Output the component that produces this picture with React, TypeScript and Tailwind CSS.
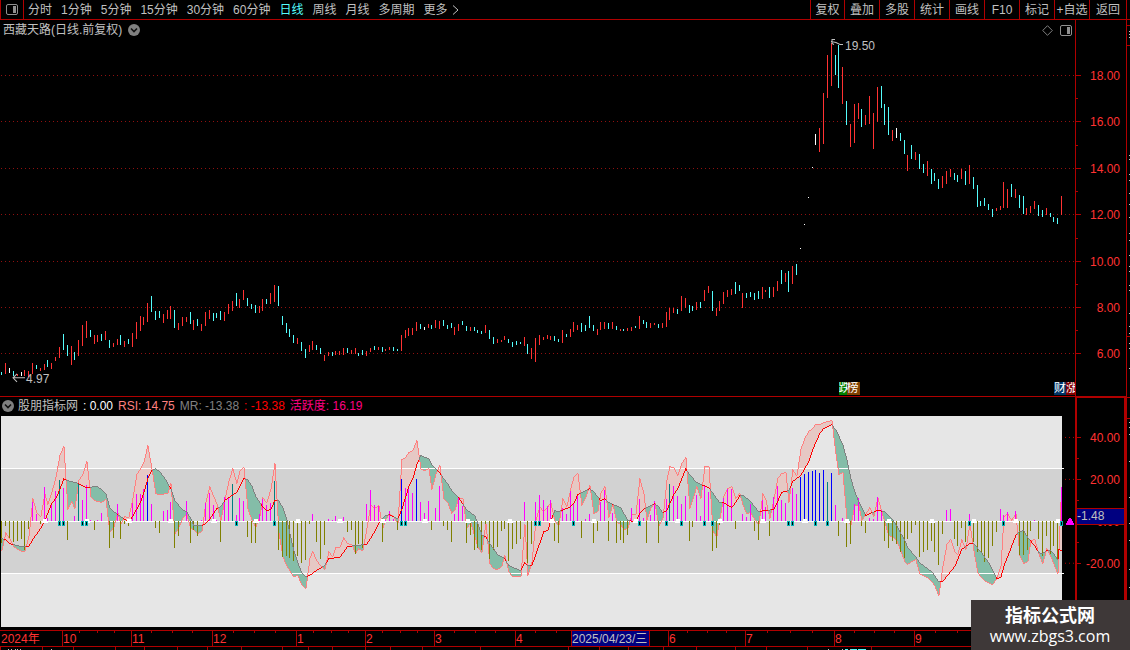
import React from 'react';
import clsx from 'clsx';

const PERIODS = ['分时', '1分钟', '5分钟', '15分钟', '30分钟', '60分钟', '日线', '周线', '月线', '多周期'];
const TOOLS = ['复权', '叠加', '多股', '统计', '画线', 'F10', '标记', '+自选', '返回'];

const LINE = '#b00000';

// x,high,low,type (r = up, c = down, w = flat)
const CANDLES = `
1,372,375,c 5,363,374,r 9,368,373,w 13,371,376,c 17,374,376,r 21,372,376,w 24,370,376,r 28,371,377,r 32,363,374,r 36,365,369,c
40,368,371,r 44,364,370,r 47,360,367,c 51,363,369,r 55,357,361,r 59,347,358,r 63,334,350,c 67,345,356,c 71,346,365,r 74,352,360,c
78,340,356,r 82,325,346,r 86,321,338,r 90,330,337,c 94,335,344,r 97,335,342,r 101,334,341,c 105,331,340,r 109,340,348,c 113,343,347,r
117,339,345,r 120,335,345,c 124,341,347,r 128,339,344,c 132,333,347,r 136,322,339,r 140,316,331,r 143,317,325,r 147,303,322,r 151,296,312,c
155,311,320,c 159,311,318,c 163,314,323,r 167,310,319,r 170,306,319,r 174,310,328,c 178,323,330,r 182,317,326,r 186,317,322,r 190,312,324,c
193,320,330,r 197,319,326,c 201,324,331,r 205,312,326,r 209,310,319,r 213,313,321,c 216,313,318,c 220,311,320,c 224,312,321,r 228,304,314,r
232,301,311,r 236,293,306,c 239,299,308,r 243,290,300,r 247,298,306,c 251,304,309,c 255,305,313,c 259,306,313,r 262,299,311,r 266,299,304,c
270,293,304,r 274,285,302,r 278,286,306,c 282,316,325,c 286,323,333,c 289,329,337,c 293,335,343,c 297,338,344,r 301,342,351,c 305,349,358,c
309,345,352,r 312,341,350,r 316,345,350,c 320,348,354,c 324,355,361,r 328,352,356,r 332,352,356,c 335,351,355,r 339,351,355,r 343,348,355,r
347,348,353,c 351,350,354,r 355,348,354,r 358,353,356,c 362,350,355,c 366,351,356,r 370,348,352,r 374,346,350,c 378,347,350,r 382,347,352,c
385,349,351,r 389,347,350,r 393,347,351,c 397,349,351,c 401,335,351,r 405,330,338,r 408,328,336,r 412,328,335,r 416,322,331,r 420,324,329,c
424,327,330,w 428,324,328,r 431,325,329,c 435,320,328,r 439,321,329,r 443,320,326,c 447,325,329,c 451,323,328,c 454,327,335,r 458,324,331,r
462,321,325,c 466,326,331,c 470,327,331,r 474,327,331,c 477,330,333,c 481,331,334,c 485,325,333,r 489,330,339,c 493,337,344,c 497,339,343,r
501,340,342,r 504,336,340,r 508,339,343,c 512,342,347,c 516,341,345,c 520,342,344,c 524,337,346,r 527,344,354,c 531,348,359,r 535,338,362,r
539,335,345,r 543,337,340,r 547,335,339,r 550,336,340,r 554,336,341,c 558,339,342,c 562,330,343,r 566,334,337,c 570,329,337,r 573,322,332,r
577,325,330,r 581,323,332,c 585,325,331,c 589,316,328,c 593,325,331,c 597,329,335,r 600,322,330,r 604,322,329,r 608,323,329,c 612,322,329,r
616,326,330,c 620,329,331,r 623,329,331,c 627,328,331,r 631,327,331,r 635,326,328,c 639,316,329,r 643,320,324,c 646,322,328,c 650,323,328,r
654,323,325,r 658,324,328,c 662,323,328,r 666,312,327,r 669,308,320,r 673,308,313,r 677,309,314,c 681,296,311,r 685,298,308,r 689,305,313,c
692,306,311,c 696,302,310,r 700,302,308,c 704,290,301,r 708,286,293,r 712,291,311,c 716,308,316,r 719,301,311,r 723,292,304,r 727,290,297,r
731,289,295,r 735,282,294,c 739,285,291,c 742,293,308,r 746,293,298,c 750,292,297,c 754,293,300,c 758,291,299,c 762,287,299,r 765,290,292,r
769,287,298,c 773,287,297,r 777,281,291,r 781,270,284,c 785,273,282,r 788,271,292,c 792,266,284,r 796,264,275,c 800,248,249,w 804,224,225,w
808,197,198,w 812,167,168,w 815,134,145,w 819,128,152,r 823,93,144,r 827,55,98,r 831,43,86,r 835,55,75,c 838,45,88,c 842,67,104,r
846,101,125,c 850,124,147,r 854,104,143,r 858,103,119,r 861,109,127,c 865,115,125,r 869,96,124,r 873,113,149,r 877,87,122,r 881,86,108,c
884,104,125,c 888,107,135,c 892,130,141,r 896,128,138,w 900,133,141,c 904,140,154,c 907,155,171,r 911,145,159,c 915,152,160,r 919,154,169,c
923,164,173,c 927,161,176,r 931,169,184,c 934,173,181,c 938,179,189,c 942,176,188,r 946,171,184,r 950,169,177,r 954,173,180,c 957,175,182,c
961,169,179,r 965,171,185,c 969,165,184,r 973,177,189,c 977,185,207,c 980,201,206,c 984,198,206,c 988,204,210,c 992,209,217,c 996,208,211,r
1000,206,210,r 1003,182,208,r 1007,189,208,r 1011,184,197,c 1015,189,198,r 1019,195,208,c 1023,196,214,c 1026,208,215,r 1030,206,213,r 1034,201,209,r
1038,205,216,c 1042,210,217,c 1046,208,215,r 1050,213,217,c 1053,217,222,c 1057,218,224,c 1061,196,215,r`;

// Activity bars: x,end,type (o = olive, m = magenta, t = teal, b = blue)
const ACTIVITY = `
1,543,o 5,526,o 9,538,o 13,542,o 17,541,o 21,539,o 24,550,o 28,529,o 32,502,m 36,514,m 40,524,o 44,487,m 47,518,m 51,505,m 55,491,m
59,480,t 63,488,m 67,540,o 74,516,m 78,483,t 82,500,m 86,485,m 90,520,m 94,530,o 97,520,m 101,513,m 109,548,o 113,538,o 117,504,m 120,539,o
124,524,o 128,526,o 132,503,m 136,494,m 140,494,m 143,489,m 147,475,b 151,504,m 155,528,o 159,533,o 163,511,m 167,510,m 170,502,m 174,548,o
178,536,o 186,501,m 190,543,o 193,530,o 197,536,o 201,520,m 205,503,m 209,493,m 213,505,m 216,520,m 220,542,o 224,497,m 228,497,m 232,484,t
236,515,m 239,498,m 243,501,m 247,537,o 251,543,o 255,543,o 259,514,m 262,499,m 266,505,m 270,503,m 274,481,t 278,550,o 282,557,o 286,556,o
289,558,o 293,561,o 297,556,o 301,563,o 305,560,o 309,524,o 312,514,m 316,542,o 320,559,o 324,545,o 328,519,m 332,520,m 335,516,m 339,519,m
343,517,m 347,532,o 351,530,o 355,554,o 358,544,o 362,548,o 366,504,m 370,490,m 374,505,m 378,506,m 382,542,o 385,520,m 389,511,m 393,519,m
397,530,o 401,479,b 405,488,m 408,487,m 412,493,m 416,479,b 420,502,m 424,513,m 428,501,m 431,530,o 435,508,m 439,486,m 443,526,o 447,530,o
451,542,o 454,514,m 458,497,m 462,506,m 466,543,o 470,535,o 474,550,o 477,548,o 481,550,o 485,524,o 489,559,o 493,550,o 497,547,o 501,531,o
504,529,o 508,561,o 512,549,o 516,544,o 520,539,o 524,502,m 527,563,o 531,544,o 535,502,m 539,495,m 543,500,m 547,506,m 550,500,m 554,541,o
558,543,o 562,508,m 566,514,m 570,491,m 573,504,m 577,496,m 581,538,o 585,519,m 589,514,m 593,543,o 597,531,o 600,502,m 604,490,m 608,541,o
612,513,m 616,543,o 620,540,o 623,543,o 627,535,o 631,508,m 635,519,m 639,499,m 643,518,m 646,543,o 650,515,m 654,501,m 658,543,o 666,499,m
669,484,t 673,486,m 677,496,m 681,504,m 685,496,m 689,541,o 692,527,o 696,495,m 700,516,m 704,485,m 708,492,m 712,551,o 716,548,o 719,525,o
723,498,m 727,489,m 731,489,m 735,529,o 742,514,m 746,517,m 750,504,m 754,531,o 758,540,o 762,500,m 765,507,m 769,536,o 773,497,m 777,486,m
781,500,m 785,503,m 792,488,m 796,494,m 800,477,b 804,474,b 808,472,b 812,471,b 815,470,b 819,473,b 823,470,b 827,482,t 831,473,b 835,505,m
838,536,o 842,518,m 846,547,o 850,544,o 854,504,m 858,498,m 861,526,o 865,533,o 869,518,m 873,519,m 877,497,m 881,510,m 884,541,o 888,548,o
892,541,o 896,544,o 900,552,o 904,558,o 907,539,o 911,533,o 915,525,o 919,557,o 923,552,o 927,550,o 931,541,o 934,552,o 938,565,o 942,534,o
946,510,m 950,509,m 954,539,o 957,546,o 961,528,o 965,542,o 969,514,m 973,542,o 977,552,o 981,553,o 984,562,o 988,558,o 992,546,o 996,532,o
1000,509,m 1003,515,m 1007,512,m 1015,511,m 1019,555,o 1023,555,o 1027,550,o 1030,531,o 1034,520,m 1038,539,o 1042,556,o 1046,536,o 1050,554,o
1053,546,o 1057,560,o 1061,487,m`;

const RSI = `
1,550 5,532 9,538 13,546 21,551 24,551 28,536 32,498 36,512 40,516 44,493 47,504 51,492 55,477 59,455 63,446 67,509 71,501 74,508 78,480
82,474 86,461 90,496 94,500 101,502 105,499 109,532 113,527 117,512 120,524 124,516 128,517 132,498 136,474 140,468 143,462 147,445 151,468
155,493 159,494 167,493 170,483 174,534 178,527 182,518 186,514 190,528 193,529 197,533 201,531 205,502 209,486 213,496 216,503 220,520
224,499 228,481 232,468 236,483 239,471 243,467 247,508 251,519 255,527 259,516 262,497 266,502 270,489 274,463 278,532 282,556 286,565
289,570 293,576 297,575 301,584 305,588 309,558 312,551 316,560 320,565 324,569 328,551 332,556 335,547 339,547 343,537 347,543 351,544
355,553 358,548 362,550 366,528 370,504 374,508 378,505 382,528 385,519 389,513 393,516 397,523 401,459 405,457 408,452 412,450 416,440
420,468 424,470 428,468 431,489 435,474 439,465 443,498 447,502 451,513 454,510 458,497 462,498 466,528 470,522 474,536 477,546 481,552
485,523 489,563 493,568 497,569 501,566 504,555 508,571 512,576 520,576 524,524 527,575 531,562 535,520 539,506 543,511 547,507 550,502
554,520 558,525 562,498 566,506 570,488 573,477 577,473 581,505 585,497 589,485 593,513 597,511 600,493 604,486 608,517 612,504 616,521
620,524 623,529 627,528 631,514 635,514 639,478 643,493 646,520 650,508 654,502 658,526 662,518 666,480 669,466 673,467 677,475 681,463
685,457 689,508 692,499 696,486 700,498 704,466 708,466 712,530 716,536 719,518 723,496 727,488 731,486 735,498 739,493 742,504 746,513
750,512 754,519 758,524 762,493 765,499 769,518 773,499 777,478 781,473 785,472 788,502 792,469 796,475 800,449 804,438 808,431 812,428
815,424 819,424 823,422 827,421 831,420 835,453 838,474 842,472 846,518 850,525 854,505 858,505 861,520 865,514 869,507 873,516 877,497
881,511 884,522 888,535 892,536 896,540 900,550 904,561 907,564 911,561 915,559 919,573 923,575 927,577 931,581 934,585 938,595 942,566
946,544 950,539 954,551 957,554 961,539 965,549 969,523 973,550 977,572 981,577 984,580 988,582 992,584 996,578 1000,566 1003,517 1007,513
1011,520 1015,513 1019,555 1023,563 1027,561 1030,540 1034,539 1038,553 1042,563 1046,548 1050,556 1057,573 1060,502 1061,489`;

const MR = `
1,538 5,539 9,543 21,546 28,546 32,539 40,528 44,520 51,503 55,498 59,489 63,478 67,480 78,483 86,487 97,486 101,489 105,493 109,507 113,511
120,516 128,521 132,516 140,501 143,492 147,478 151,470 155,468 159,471 163,476 170,488 174,500 182,509 186,511 190,518 193,525 201,525
205,523 209,519 216,508 220,506 224,500 236,492 243,478 247,479 251,485 255,496 262,506 266,510 270,509 274,500 278,500 282,507 286,519
289,533 293,550 297,562 301,572 305,576 309,575 316,570 324,565 328,558 339,557 347,546 355,545 366,544 374,531 378,523 385,515 389,514
397,518 401,509 408,486 412,478 416,464 420,455 428,458 431,464 439,472 443,478 447,483 451,490 458,497 466,509 474,515 477,523 481,534
485,536 489,543 493,548 497,554 504,558 508,565 520,570 524,562 527,565 531,565 535,554 543,531 547,530 550,520 554,510 558,511 569,507
573,503 577,494 589,488 593,491 600,500 604,498 608,502 620,507 627,520 635,521 639,513 643,509 654,503 658,506 662,512 666,510 673,494
677,488 685,468 689,474 696,482 708,487 719,502 723,502 731,507 735,502 739,495 743,495 750,501 758,511 773,509 781,492 788,490 792,481
800,475 808,461 812,449 819,433 823,428 831,424 835,429 842,444 846,459 850,478 854,491 858,501 865,515 869,513 877,510 884,511 892,519
896,525 904,540 907,547 915,556 919,562 931,571 938,581 942,581 954,566 961,549 969,543 973,543 980,551 988,562 996,578 1000,577 1003,566
1015,535 1019,531 1023,530 1027,537 1034,545 1038,552 1042,553 1046,550 1050,550 1053,553 1057,559 1058,549 1061,550`;

const SIGNALS = [59, 63, 82, 86, 236, 274, 401, 405, 535, 539, 573, 639, 666, 681, 704, 712, 788, 792, 815, 827, 969, 1003, 1061];
const WEEK_MARKS = [43, 85, 127, 169, 212, 254, 296, 338, 381, 423, 466, 508, 550, 592, 634, 676, 718, 761, 803, 845, 887, 930, 972, 1014, 1056];

const PRICE_LABELS = ['18.00', '16.00', '14.00', '12.00', '10.00', '8.00', '6.00'];
const PRICE_Y = [75, 121, 168, 214, 261, 307, 353];
const PRICE_MINOR_Y = [98, 145, 191, 238, 284, 330];

const MONTHS = [
  { label: '2024年', width: 62 },
  { label: '10', width: 69 },
  { label: '11', width: 81 },
  { label: '12', width: 84 },
  { label: '1', width: 69 },
  { label: '2', width: 69 },
  { label: '3', width: 81 },
  { label: '4', width: 56 },
  { label: '2025/04/23/三', width: 78, selected: true },
  { label: '', width: 19 },
  { label: '6', width: 77 },
  { label: '7', width: 89 },
  { label: '8', width: 80 },
  { label: '9', width: 212 },
];
const WEEK_TICKS = [79, 97, 114, 151, 172, 192, 233, 254, 275, 313, 331, 348, 382, 400, 417, 454, 475, 495, 535, 556, 687, 707, 726, 767, 790, 812, 854, 874, 894, 935, 957];
const STATUS_TICKS = [0, 42, 73, 115, 144, 177, 207, 241, 282, 308, 332, 365, 390, 422, 480, 568, 599, 628, 663, 696, 735, 766, 807, 871];

const rows = (text: string) => text.trim().split(/\s+/).map(r => r.split(','));

const CANDLE_COLORS: Record<string, string> = { r: '#ff3232', c: '#54fcfc', w: '#ffffff' };
const BAR_COLORS: Record<string, string> = { o: '#808000', m: '#ff00ff', t: '#008080', b: '#0000ff' };
const ZERO_Y = 521;

// Value of a curve at every whole x between its first and last point
const sample = (text: string) => {
  const pts = rows(text).map(([x, y]) => [Number(x), Number(y)]);
  const out: number[] = [];
  for (let i = 0; i < pts.length - 1; i++) {
    const [x0, y0] = pts[i];
    const [x1, y1] = pts[i + 1];
    for (let x = x0; x < x1; x++) {
      out[x] = Math.round(y0 + ((y1 - y0) * (x - x0)) / (x1 - x0));
    }
  }
  const last = pts[pts.length - 1];
  out[last[0]] = last[1];
  return out;
};

const buildCurves = () => {
  const rsi = sample(RSI);
  const mr = sample(MR);
  const paths = { pink: '', green: '', rsi: '', up: '', down: '' };
  for (let x = 1; x <= 1061; x++) {
    const above = rsi[x] <= mr[x];
    const step = (a: number[]) => {
      const prev = a[x - 1] ?? a[x];
      // keep every column at least one pixel tall and joined to the one before
      if (prev === a[x]) return `M${x} ${a[x]}h1v1h-1z`;
      return prev < a[x]
        ? `M${x} ${prev + 1}h1V${a[x] + 1}h-1z`
        : `M${x} ${a[x]}h1V${prev}h-1z`;
    };
    if (rsi[x] !== mr[x]) {
      paths[above ? 'pink' : 'green'] += `M${x} ${rsi[x]}h1V${mr[x]}h-1z`;
    }
    paths.rsi += step(rsi);
    paths[above ? 'up' : 'down'] += step(mr);
  }
  return paths;
};

const PanelIcon: React.FC = () => (
  <svg width="12" height="11" viewBox="0 0 12 11" fill="none">
    <rect x="0.5" y="0.5" width="11" height="10" rx="1.5" stroke="#909090" />
    <rect x="7" y="2" width="3" height="7" fill="#909090" />
  </svg>
);

const CollapseIcon: React.FC = () => (
  <svg width="12" height="12" viewBox="0 0 12 12">
    <circle cx="6" cy="6" r="6" fill="#808080" />
    <path d="M3 4.5l3 3 3-3" fill="none" stroke="#101010" strokeWidth="1.6" />
  </svg>
);

const Toolbar: React.FC = () => (
  <header className="flex h-5 flex-none items-stretch border-b border-[#b00000] text-[#c0c0c0]">
    <button aria-label="Layout" className="flex w-6 items-center justify-center border-x border-[#b00000] pb-px">
      <PanelIcon />
    </button>
    <nav className="flex items-center gap-[9px] whitespace-nowrap pl-1">
      {PERIODS.map(p => (
        <button key={p} className={clsx('leading-[18px]', p === '日线' && 'text-[#54fcfc]')}>{p}</button>
      ))}
      <button className="flex items-center gap-1 leading-[18px]">
        更多
        <svg width="7" height="10" viewBox="0 0 7 10" fill="none" stroke="#c0c0c0">
          <path d="M1 0.5l5 4.5-5 4.5" />
        </svg>
      </button>
    </nav>
    <div className="ml-auto flex">
      {TOOLS.map((t, i) => (
        <button
          key={t}
          className={clsx(
            'whitespace-nowrap border-l border-[#b00000] text-center leading-[18px]',
            i === 0 && 'w-[34px]',
            i > 0 && i < TOOLS.length - 1 && 'w-[35px]',
            i === TOOLS.length - 1 && 'w-[37px]'
          )}
        >
          {t}
        </button>
      ))}
      <div className="w-1 border-l border-[#b00000]" />
    </div>
  </header>
);

const PriceChart: React.FC = () => (
  <section className="flex min-h-0 flex-[377_1_0%] border-b border-[#b00000]">
    <div className="relative min-w-0 flex-1">
      <svg className="absolute inset-0 h-full w-full" viewBox="0 20 1075 376" preserveAspectRatio="none">
        <g shapeRendering="crispEdges">
          {PRICE_Y.map(y => (
            <line key={y} x1="1" x2="1075" y1={y + 0.5} y2={y + 0.5} stroke="#901010" strokeDasharray="1 3" />
          ))}
          {rows(CANDLES).map(([x, top, bottom, type]) => (
            <rect key={x} x={x} y={top} width="1" height={Number(bottom) - Number(top)} fill={CANDLE_COLORS[type]} />
          ))}
        </g>
        <g fill="none" stroke="#c0c0c0">
          <path d="M843 44.5h-3l-4-2-5-1M835 39.500h-3v4l2 1" />
          <path d="M25 377.500H13M17 373.500l-4 4 4 4" />
        </g>
        <g fill="#c0c0c0" fontSize="12">
          <text x="845" y="50">19.50</text>
          <text x="26" y="383">4.97</text>
        </g>
      </svg>
      <div className="relative flex items-center justify-between pl-[3px] pr-[3px] text-[#c0c0c0]">
        <div className="flex items-center gap-[6px]">
          <h1 className="leading-5">西藏天路(日线.前复权)</h1>
          <button aria-label="Collapse"><CollapseIcon /></button>
        </div>
        <div className="flex items-center gap-[7px]">
          <svg width="11" height="11" viewBox="0 0 11 11" fill="none" stroke="#808080">
            <path d="M5.500 0.700l4.800 4.800-4.800 4.800L0.700 5.500z" />
          </svg>
          <PanelIcon />
        </div>
      </div>
      <div className="absolute bottom-px left-[78%] flex h-[13px] leading-[13px] text-white">
        <span className="w-2 overflow-hidden bg-[#008000]">跌</span>
        <span className="w-[13px] overflow-hidden bg-[#804000]">榜</span>
      </div>
      <div className="absolute bottom-px right-0 flex h-[13px] leading-[13px] text-white">
        <span className="w-3 overflow-hidden bg-[#003366]">财</span>
        <span className="w-[9px] overflow-hidden bg-[#800000]">涨</span>
      </div>
    </div>
    <div className="relative w-[51px] border-l border-[#b00000]">
      <svg className="absolute inset-y-0 left-0 h-full w-[6px]" viewBox="0 20 6 376" preserveAspectRatio="none" shapeRendering="crispEdges" fill={LINE}>
        {PRICE_Y.map(y => <rect key={y} x="0" y={y} width="5" height="1" />)}
        {PRICE_MINOR_Y.map(y => <rect key={y} x="0" y={y} width="2" height="1" />)}
      </svg>
      <div className="flex h-full flex-col justify-between pb-[34px] pr-[6px] pt-12 text-right leading-4 text-[#ff3232]">
        {PRICE_LABELS.map(l => <span key={l}>{l}</span>)}
      </div>
    </div>
  </section>
);

const IndicatorPlot: React.FC = () => {
  const curves = buildCurves();
  return (
    <svg className="block min-h-0 w-full flex-1" viewBox="0 416 1075 211" preserveAspectRatio="none" shapeRendering="crispEdges">
      <rect x="1" y="416" width="1061" height="211" fill="#e6e6e6" />
      <rect x="1" y="469" width="1061" height="104" fill="#d2d2d2" />
      <path d={curves.pink} fill="#e6c8c4" />
      <path d={curves.green} fill="#84bda8" />
      <rect x="1" y="468" width="1063" height="1" fill="#fff" />
      <rect x="1" y="573" width="1063" height="1" fill="#fff" />
      <rect x="1" y={ZERO_Y} width="1061" height="1" fill="#fff" />
      <path d={curves.rsi} fill="#ff8080" />
      {rows(ACTIVITY).map(([x, end, type]) => {
        const y = Number(end);
        return (
          <rect key={x} x={x} y={Math.min(y, ZERO_Y)} width="1" height={Math.max(1, Math.abs(ZERO_Y - y))} fill={BAR_COLORS[type]} />
        );
      })}
      <path d={curves.down} fill="#808080" />
      <path d={curves.up} fill="#ff0000" />
      {WEEK_MARKS.map(x => <path key={x} d={`M${x} 519h4v2h1v2h-6v-2h1z`} fill="#fff" />)}
      {SIGNALS.map(x => (
        <g key={x}>
          <rect x={x - 1} y="521" width="3" height="5" fill="#00b4b4" />
          <rect x={x} y="522" width="1" height="3" fill="#000" />
        </g>
      ))}
      {[437, 479, 563].map(y => (
        <line key={y} x1="1065" x2="1075" y1={y + 0.5} y2={y + 0.5} stroke={LINE} strokeDasharray="1 3" />
      ))}
      <path d="M1066 525v-1l4-7 4 7v1z" fill="#ff00ff" />
    </svg>
  );
};

const IndicatorChart: React.FC = () => (
  <section className="flex min-h-0 flex-[233_1_0%]">
    <div className="flex min-w-0 flex-1 flex-col pb-[3px]">
      <div className="flex h-[19px] flex-none items-center gap-[5px] whitespace-nowrap pb-[2px] pl-[2px]">
        <button aria-label="Collapse"><CollapseIcon /></button>
        <h2 className="-ml-px text-[#c0c0c0]">股朋指标网</h2>
        <span className="text-white">: 0.00</span>
        <span className="text-[#ff8080]">RSI: 14.75</span>
        <span className="text-[#808080]">MR: -13.38</span>
        <span className="text-[#ff0000]">: -13.38</span>
        <span className="text-[#ff0080]">活跃度: 16.19</span>
      </div>
      <IndicatorPlot />
    </div>
    <div className="relative w-[51px] border-x-2 border-t border-[#b00000]">
      <svg className="absolute inset-y-0 left-0 h-full w-[6px]" viewBox="0 398 6 232" preserveAspectRatio="none" shapeRendering="crispEdges" fill={LINE}>
        {[437, 479, 521, 563].map(y => <rect key={y} x="0" y={y} width="4" height="1" />)}
        {[458, 500, 542].map(y => <rect key={y} x="0" y={y} width="2" height="1" />)}
      </svg>
      <div className="flex h-full flex-col justify-between pb-[58px] pr-1 pt-8 text-right leading-4 text-[#ff3232]">
        <span>40.00</span>
        <span>20.00</span>
        <span>0.00</span>
        <span>-20.00</span>
      </div>
      <div className="absolute left-0 right-0 top-[110px] h-[17px] border-y border-[#b00000] bg-[#000080] leading-[15px] text-[#c0c0c0]">
        -1.48
      </div>
    </div>
  </section>
);

const Timeline: React.FC = () => (
  <div className="relative flex h-[17px] flex-none border-y border-[#b00000] leading-4 text-[#ff3232]">
    {MONTHS.map((m, i) => (
      <div
        key={i}
        className={clsx(
          'flex-none whitespace-nowrap',
          i > 0 && 'border-l border-[#b00000]',
          i === 0 && 'pl-px',
          m.selected && 'bg-[#000080] text-[#c0c0c0]'
        )}
        style={{ width: `${(m.width / 1126) * 100}%` }}
      >
        {m.label}
      </div>
    ))}
    <svg className="absolute inset-x-0 top-0 h-[2px] w-full" viewBox="0 0 1126 2" preserveAspectRatio="none" shapeRendering="crispEdges" fill={LINE}>
      {WEEK_TICKS.map(x => <rect key={x} x={x} y="0" width="1" height="2" />)}
    </svg>
  </div>
);

// Top edge of the quote bar that runs on below the window
const StatusEdge: React.FC = () => (
  <svg className="h-[3px] w-full flex-none" viewBox="0 0 1126 3" preserveAspectRatio="none" shapeRendering="crispEdges">
    {STATUS_TICKS.map(x => <rect key={x} x={x} y="0" width="1" height="3" fill={LINE} />)}
    {[8, 11, 15, 17, 20, 51, 828, 842, 846, 850].map(x => <rect key={x} x={x} y="2" width="1" height="1" fill="#c0c0c0" />)}
    <path d="M845 2h3v1h-3zM851 2h6v1h-6zM858 2h8v1h-8z" fill="#54fcfc" />
  </svg>
);

const SideEdge: React.FC = () => (
  <div className="w-1 flex-none border-l border-[#b00000]">
    <svg className="h-full w-[3px]" viewBox="0 20 3 630" preserveAspectRatio="none" shapeRendering="crispEdges">
      {[25, 45, 336, 397, 418].map(y => <rect key={y} x="0" y={y} width="3" height="1" fill={LINE} />)}
      {[31, 34, 37, 155, 159, 174, 180, 193, 204, 217, 233, 240, 255, 266, 271, 285, 290, 313, 326, 333, 343, 348, 368, 422, 427, 434, 461, 497, 523, 540, 569, 587].map(y => (
        <rect key={y} x="2" y={y} width="1" height="1" fill="#c0c0c0" />
      ))}
    </svg>
  </div>
);

const App: React.FC = () => {
  return (
    <div className="relative flex h-screen flex-col overflow-hidden bg-black font-['Liberation_Sans','Noto_Sans_CJK_SC',sans-serif] text-[12px]">
      <Toolbar />
      <div className="flex min-h-0 flex-1">
        <main className="flex min-w-0 flex-1 flex-col">
          <PriceChart />
          <IndicatorChart />
          <Timeline />
          <StatusEdge />
        </main>
        <SideEdge />
      </div>
      <div className="absolute bottom-0 right-0 flex h-[50px] w-[159px] flex-col items-center bg-[#3e3838] pr-px pt-[6px] text-white">
        <strong className="text-[18px] leading-5">指标公式网</strong>
        <a href="#" className="font-['Open_Sans',sans-serif] text-[16px] leading-5">www.zbgs3.com</a>
      </div>
    </div>
  );
};

export default App;
